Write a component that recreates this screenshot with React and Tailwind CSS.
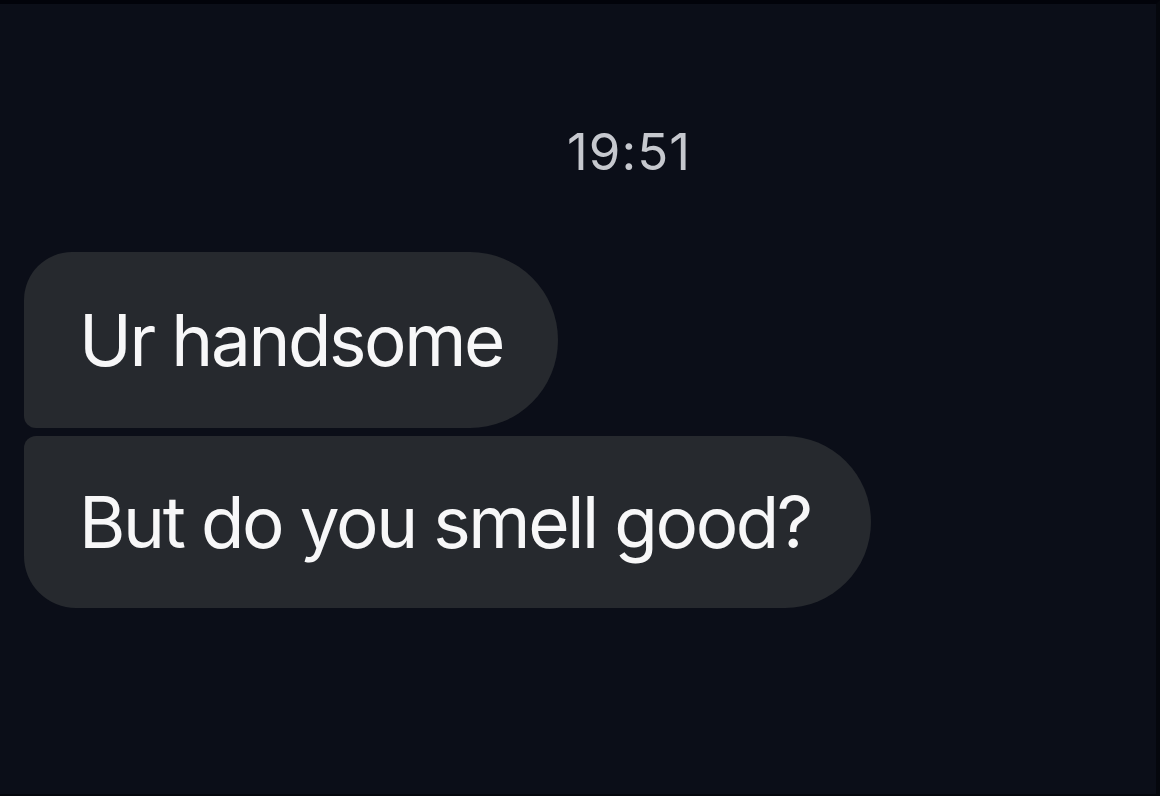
import React from "react";

const messages = [
  { id: 1, text: "Ur handsome", shape: "rounded-tl-[48px] rounded-bl-[12px] rounded-r-[88px]", box: "h-[176px] pr-[55px]" },
  { id: 2, text: "But do you smell good?", shape: "rounded-tl-[12px] rounded-bl-[52px] rounded-r-[86px]", box: "h-[172px] pr-[60px]" },
];

export default function App() {
  return (
    <div
      className="w-[1160px] h-[796px] bg-[#0b0e18] border-t-[4px] border-t-[#02030a] border-r-[4px] border-r-[#05070d] border-b-[2px] border-b-[#05070d] flex flex-col overflow-hidden"
      style={{ fontFamily: "Inter, 'Noto Sans', sans-serif" }}
    >
      <div className="pt-[122px] flex justify-center pl-[102px]">
        <span className="text-[51px] leading-none text-[#c6c8ce] tracking-[1px]">19:51</span>
      </div>

      <div className="mt-[75px] pl-[24px] flex flex-col items-start gap-[8px]">
        {messages.map((m) => (
          <div
            key={m.id}
            className={`${m.box} ${m.shape} bg-[#26292e] flex items-center pl-[55px]`}
          >
            <span className="text-[71px] leading-none text-[#f7f7f8] tracking-[-2.4px] whitespace-nowrap">
              {m.text}
            </span>
          </div>
        ))}
      </div>
    </div>
  );
}
